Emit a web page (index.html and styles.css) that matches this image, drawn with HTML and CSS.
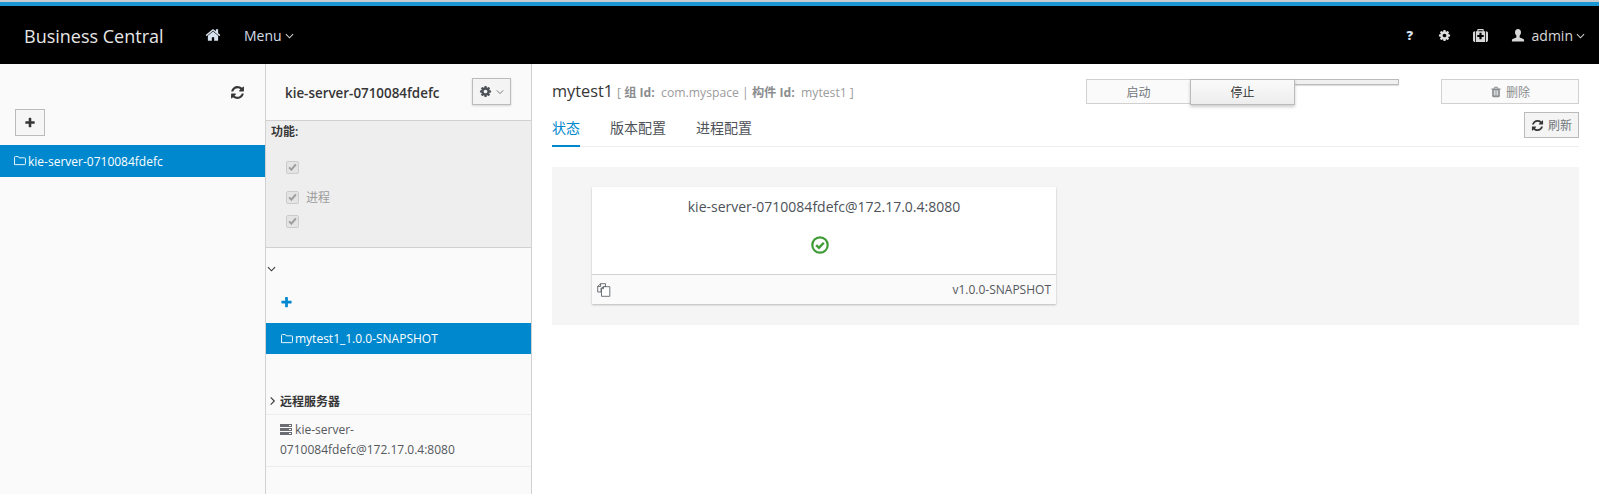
FILE: index.html
```html
<!DOCTYPE html>
<html lang="zh">
<head>
<meta charset="utf-8">
<title>Business Central</title>
<link rel="stylesheet" href="styles.css">
</head>
<body>
<svg class="defs" aria-hidden="true">
  <symbol id="i-refresh" viewBox="0 0 1792 1792"><path d="M1639 1056q0 5-1 7-64 268-268 434.5t-478 166.5q-146 0-282.5-55t-243.5-157l-129 129q-19 19-45 19t-45-19-19-45v-448q0-26 19-45t45-19h448q26 0 45 19t19 45-19 45l-137 137q71 66 161 102t187 36q134 0 250-65t186-179q11-17 53-117 8-23 30-23h192q13 0 22.5 9.5t9.5 22.5zm25-800v448q0 26-19 45t-45 19h-448q-26 0-45-19t-19-45 19-45l138-138q-148-137-349-137-134 0-250 65t-186 179q-11 17-53 117-8 23-30 23h-199q-13 0-22.5-9.5t-9.5-22.5v-7q65-268 270-434.5t480-166.5q146 0 284 55.5t245 156.5l130-129q19-19 45-19t45 19 19 45z"/></symbol>
  <symbol id="i-plus" viewBox="0 0 1792 1792"><path d="M1600 736v192q0 40-28 68t-68 28h-416v416q0 40-28 68t-68 28h-192q-40 0-68-28t-28-68v-416h-416q-40 0-68-28t-28-68v-192q0-40 28-68t68-28h416v-416q0-40 28-68t68-28h192q40 0 68 28t28 68v416h416q40 0 68 28t28 68z"/></symbol>
  <symbol id="i-cog" viewBox="0 0 1792 1792"><path d="M1152 896q0-106-75-181t-181-75-181 75-75 181 75 181 181 75 181-75 75-181zm512-109v222q0 12-8 23t-20 13l-185 28q-19 54-39 91 35 50 107 138 10 12 10 25t-9 23q-27 37-99 108t-94 71q-12 0-26-9l-138-108q-44 23-91 38-16 136-29 186-7 28-36 28h-222q-14 0-24.5-8.5t-11.5-21.5l-28-184q-49-16-90-37l-141 107q-10 9-25 9-14 0-25-11-126-114-165-168-7-10-7-23 0-12 8-23 15-21 51-66.5t54-70.5q-27-50-41-99l-183-27q-13-2-21-12.5t-8-23.5v-222q0-12 8-23t19-13l186-28q14-46 39-92-40-57-107-138-10-12-10-24 0-10 9-23 26-36 98.5-107.5t94.5-71.5q13 0 26 10l138 107q44-23 91-38 16-136 29-186 7-28 36-28h222q14 0 24.5 8.5t11.5 21.5l28 184q49 16 90 37l142-107q9-9 24-9 13 0 25 10 129 119 165 170 7 8 7 22 0 12-8 23-15 21-51 66.5t-54 70.5q26 50 41 98l183 28q13 2 21 12.5t8 23.5z"/></symbol>
  <symbol id="i-home" viewBox="0 0 1792 1792"><path d="M1472 992v480q0 26-19 45t-45 19h-384v-384h-256v384h-384q-26 0-45-19t-19-45v-480q0-1 .5-3t.5-3l575-474 575 474q1 2 1 6zm223-69l-62 74q-8 9-21 11h-3q-13 0-21-7l-692-577-692 577q-12 8-24 7-13-2-21-11l-62-74q-8-10-7-23.5t11-21.5l719-599q32-26 76-26t76 26l244 204v-195q0-14 9-23t23-9h192q14 0 23 9t9 23v408l219 182q10 8 11 21.5t-7 23.5z"/></symbol>
  <symbol id="i-user" viewBox="0 0 16 16"><path d="M8 1c2 0 3.200 1.500 3.200 3.500 0 1.500-.7 3-1.500 3.700v1.300c0 .6 1 1 2.300 1.500 1.400.6 2.500 1 2.500 2.200v1.300H1.500v-1.300c0-1.200 1.100-1.600 2.500-2.200 1.300-.5 2.300-.9 2.300-1.500V8.200C5.500 7.500 4.800 6 4.800 4.500 4.800 2.500 6 1 8 1z"/></symbol>
  <symbol id="i-medkit" viewBox="0 0 1792 1792"><path d="M1280 1056v-192q0-14-9-23t-23-9h-224v-224q0-14-9-23t-23-9h-192q-14 0-23 9t-9 23v224h-224q-14 0-23 9t-9 23v192q0 14 9 23t23 9h224v224q0 14 9 23t23 9h192q14 0 23-9t9-23v-224h224q14 0 23-9t9-23zm-640-672h512v-128h-512v128zm-384 0v1280h-32q-92 0-158-66t-66-158v-832q0-92 66-158t158-66h32zm1184 0v1280h-1088v-1280h160v-160q0-40 28-68t68-28h576q40 0 68 28t28 68v160h160zm352 224v832q0 92-66 158t-158 66h-32v-1280h32q92 0 158 66t66 158z"/></symbol>
  <symbol id="i-trash" viewBox="0 0 1792 1792"><path d="M704 1376v-704q0-14-9-23t-23-9h-64q-14 0-23 9t-9 23v704q0 14 9 23t23 9h64q14 0 23-9t9-23zm256 0v-704q0-14-9-23t-23-9h-64q-14 0-23 9t-9 23v704q0 14 9 23t23 9h64q14 0 23-9t9-23zm256 0v-704q0-14-9-23t-23-9h-64q-14 0-23 9t-9 23v704q0 14 9 23t23 9h64q14 0 23-9t9-23zm-544-992h448l-48-117q-7-9-17-11h-317q-10 2-17 11zm928 32v64q0 14-9 23t-23 9h-96v948q0 83-47 143.5t-113 60.5h-832q-66 0-113-58.5t-47-141.5v-952h-96q-14 0-23-9t-9-23v-64q0-14 9-23t23-9h309l70-167q15-37 54-63t79-26h320q40 0 79 26t54 63l70 167h309q14 0 23 9t9 23z"/></symbol>
  <symbol id="i-folder" viewBox="0 0 13 11"><path d="M.5 9.500V1.500q0-1 1-1h3l1 1.500h6q1 0 1 1v5.500q0 1-1 1h-10q-1 0-1-1z" fill="none" stroke="currentColor"/></symbol>
  <symbol id="i-down" viewBox="0 0 10 6"><path d="M1 1l4 4 4-4" fill="none" stroke="currentColor" stroke-width="1.200"/></symbol>
  <symbol id="i-check" viewBox="0 0 12 10"><path d="M1.500 5.500l3 3 6-7" fill="none" stroke="currentColor" stroke-width="2.600"/></symbol>
</svg>

<div class="topline"></div>
<header class="navbar">
  <span class="brand">Business Central</span>
  <svg class="ico nav-home"><use href="#i-home"/></svg>
  <span class="nav-menu">Menu</span>
  <svg class="chev"><use href="#i-down"/></svg>
  <nav class="nav-right">
    <span class="nav-q">?</span>
    <svg class="ico nav-cog"><use href="#i-cog"/></svg>
    <svg class="ico nav-kit"><use href="#i-medkit"/></svg>
    <svg class="ico nav-user"><use href="#i-user"/></svg>
    <span class="nav-admin">admin</span>
    <svg class="chev"><use href="#i-down"/></svg>
  </nav>
</header>

<main class="layout">
  <aside class="col-left">
    <div class="left-refresh"><svg class="ico ico-refresh"><use href="#i-refresh"/></svg></div>
    <button class="btn-add"><svg class="ico ico-plus"><use href="#i-plus"/></svg></button>
    <div class="row-selected left-row"><svg class="ico-folder"><use href="#i-folder"/></svg><span>kie-server-0710084fdefc</span></div>
  </aside>

  <section class="col-mid">
    <div class="mid-head">
      <strong class="mid-title">kie-server-0710084fdefc</strong>
      <button class="btn-gear"><svg class="ico ico-gear"><use href="#i-cog"/></svg><svg class="chev chev-gear"><use href="#i-down"/></svg></button>
    </div>
    <div class="caps">
      <div class="caps-title">功能:</div>
      <div class="cap cap-first"><span class="checkbox"><svg class="check-mark"><use href="#i-check"/></svg></span></div>
      <div class="cap cap-second"><span class="checkbox"><svg class="check-mark"><use href="#i-check"/></svg></span><span class="cap-label">进程</span></div>
      <div class="cap cap-third"><span class="checkbox"><svg class="check-mark"><use href="#i-check"/></svg></span></div>
    </div>
    <div class="mid-toggle"><svg class="chev chev-dark"><use href="#i-down"/></svg></div>
    <div class="mid-add"><svg class="ico ico-plus-blue"><use href="#i-plus"/></svg></div>
    <div class="row-selected mid-row"><svg class="ico-folder"><use href="#i-folder"/></svg><span>mytest1_1.0.0-SNAPSHOT</span></div>
    <div class="remote-head"><svg class="chev chev-right"><use href="#i-down"/></svg><strong>远程服务器</strong></div>
    <div class="remote-item">
      <svg class="ico-server" viewBox="0 0 12 11"><path d="M0 0h12v3H0zM0 4h12v3H0zM0 8h12v3H0z"/><path class="server-led" d="M9 1h2v1H9zM9 5h2v1H9zM9 9h2v1H9z"/></svg>
      kie-server-<br>0710084fdefc@172.17.0.4:8080
    </div>
  </section>

  <section class="col-main">
    <div class="main-head">
      <div class="main-title"><span class="title-name">mytest1</span><span class="title-meta">[ <b>组 Id:</b>&nbsp; com.myspace | <b>构件 Id:</b>&nbsp; mytest1 ]</span></div>
      <div class="btn-group">
        <button class="btn btn-start">启动</button>
        <button class="btn btn-stop">停止</button>
        <span class="btn-rest"></span>
      </div>
      <button class="btn btn-delete"><svg class="ico ico-trash"><use href="#i-trash"/></svg>删除</button>
    </div>
    <div class="tabs-row">
      <div class="tabs">
        <a class="tab tab-active">状态</a>
        <a class="tab">版本配置</a>
        <a class="tab">进程配置</a>
      </div>
      <button class="btn btn-refresh"><svg class="ico ico-refresh-sm"><use href="#i-refresh"/></svg>刷新</button>
    </div>
    <div class="status-panel">
      <article class="card">
        <div class="card-title">kie-server-0710084fdefc@172.17.0.4:8080</div>
        <div class="card-status">
          <svg class="ok" viewBox="0 0 18 18"><circle cx="9" cy="9" r="7.700" fill="none" stroke="#3f9c35" stroke-width="2.200"/><path d="M5.200 9.200l2.800 2.700 4.800-5.200" fill="none" stroke="#3f9c35" stroke-width="2.400"/></svg>
        </div>
        <div class="card-foot">
          <svg class="ico-copy" viewBox="0 0 14 14"><path d="M3.500 .7H8.500V4H5.500L4 5.500V9H.7V3.500zM3.500 .7V3.500H.7" fill="none" stroke="#4d5258" stroke-width=".8"/><path d="M6.500 3.700H12.800V13.300H4.500V5.700zM6.500 3.700V5.700H4.500" fill="#fff" stroke="#4d5258" stroke-width=".8"/></svg>
          <span class="card-version">v1.0.0-SNAPSHOT</span>
        </div>
      </article>
    </div>
  </section>
</main>
</body>
</html>
```
FILE: styles.css
```css
* { box-sizing: border-box; }
html, body { margin: 0; height: 494px; overflow: hidden; }
body { font-family: "Open Sans", "Noto Sans CJK SC", sans-serif; font-size: 12px; color: #363636; background: #fff; }
.defs { display: none; }
button { font-family: inherit; padding: 0; cursor: default; }
.ico { fill: currentColor; display: block; flex: none; }

.topline { height: 6px; border-top: 2px solid #c9ccce; background: #1b98d4; }
.navbar { height: 58px; background: #000; color: #d1d1d1; display: flex; align-items: center; padding: 0 14px 0 24px; }
.brand { font-size: 18px; color: #e6e6e6; width: 181px; flex: none; position: relative; top: 1px; }
.nav-home { width: 16px; height: 16px; color: #d8e3ef; }
.nav-menu { font-size: 14px; margin-left: 23px; color: #d1dbe6; }
.chev { width: 9px; height: 6px; color: #d1d1d1; margin-left: 3px; margin-top: 2px; flex: none; display: block; }
.nav-right { margin-left: auto; display: flex; align-items: center; }
.nav-q { font-weight: 800; font-size: 13px; color: #d8e3ef; width: 8px; }
.nav-cog { width: 13px; height: 13px; margin-left: 23px; color: #e0e0e0; }
.nav-kit { width: 15px; height: 15px; margin-left: 22px; color: #d8d8d8; }
.nav-user { width: 16px; height: 15px; margin-left: 22px; color: #d8d8d8; }
.nav-admin { font-size: 14px; margin-left: 6px; color: #d8d8d8; }

.layout { display: flex; height: 430px; }
.col-left { width: 266px; flex: none; background: #fafafa; border-right: 1px solid #d1d1d1; display: flex; flex-direction: column; }
.col-mid { width: 266px; flex: none; background: #fafafa; border-right: 1px solid #d1d1d1; display: flex; flex-direction: column; }
.col-main { flex: 1; padding: 15px 20px 0 20px; min-width: 0; }

.left-refresh { height: 45px; padding: 21px 20px 0 0; display: flex; justify-content: flex-end; }
.ico-refresh { width: 15px; height: 15px; color: #363636; }
.btn-add { width: 30px; height: 27px; margin-left: 15px; background: #f6f6f6; border: 1px solid #bbb; display: flex; align-items: center; justify-content: center; }
.ico-plus { width: 12px; height: 12px; color: #363636; }
.row-selected { background: #0088ce; color: #fff; display: flex; align-items: center; font-size: 12px; }
.left-row { height: 32px; margin-top: 9px; padding-left: 14px; }
.ico-folder { width: 12px; height: 10px; margin-right: 2px; flex: none; color: #fff; }

.mid-head { height: 56px; display: flex; align-items: center; padding: 0 20px 0 19px; justify-content: space-between; }
.mid-title { font-size: 13.4px; font-weight: 600; color: #363636; margin-top: 2px; }
.btn-gear { width: 39px; height: 27px; margin-top: -1px; background: #f4f4f4; border: 1px solid #bbb; box-shadow: 0 1px 2px rgba(0,0,0,.15); display: flex; align-items: center; justify-content: center; }
.ico-gear { width: 13px; height: 13px; color: #4d5258; }
.chev-gear { color: #72767b; margin-left: 4px; width: 8px; margin-top: 0; }
.caps { height: 128px; background: #eee; border-top: 1px solid #d1d1d1; border-bottom: 1px solid #d1d1d1; padding: 1px 0 0 5px; }
.caps-title { font-weight: 600; font-size: 12px; height: 20px; line-height: 20px; }
.cap { display: flex; align-items: center; height: 20px; padding-left: 15px; }
.cap-first { margin-top: 15px; }
.cap-second { margin-top: 10px; }
.cap-third { margin-top: 4px; }
.checkbox { width: 13px; height: 13px; border: 1px solid #ccc; border-radius: 2px; background: #e4e4e4; display: flex; align-items: center; justify-content: center; flex: none; }
.check-mark { width: 9px; height: 8px; color: #9c9c9c; display: block; }
.cap-label { margin-left: 7px; color: #9c9c9c; font-size: 12px; }
.mid-toggle { height: 40px; padding: 18px 0 0 1px; }
.chev-dark { color: #363636; margin-left: 0; margin-top: 0; width: 9px; }
.chev-right { transform: rotate(-90deg); color: #363636; margin: 0 0 0 1px; width: 9px; }
.mid-add { height: 35px; padding: 8px 0 0 14px; }
.ico-plus-blue { width: 13px; height: 13px; color: #0088ce; }
.mid-row { height: 31px; padding-left: 15px; }
.remote-head { margin-top: 36px; height: 25px; display: flex; align-items: center; padding-left: 1px; border-bottom: 1px solid #ededed; font-size: 12px; color: #363636; padding-bottom: 3px; }
.remote-head strong { font-weight: 600; margin-left: 3px; }
.remote-item { border-bottom: 1px solid #ededed; padding: 5px 10px 6px 14px; line-height: 20px; font-size: 12px; color: #55585c; }
.ico-server { width: 12px; height: 11px; fill: #6a6d71; vertical-align: -1px; }
.server-led { fill: #fff; }

.main-head { display: flex; align-items: flex-start; height: 24px; }
.main-title { flex: none; width: 534px; display: flex; align-items: baseline; white-space: nowrap; padding-top: 1px; }
.title-name { font-size: 16.3px; color: #363636; }
.title-meta { font-size: 12.2px; color: #9c9c9c; margin-left: 4px; }
.title-meta b { font-weight: 700; color: #8b8d8f; }
.btn-group { display: flex; align-items: flex-start; flex: none; }
.btn { font-size: 12px; color: #4d5258; background: #fafafa; border: 1px solid #d1d1d1; height: 25px; display: flex; align-items: center; justify-content: center; }
.btn-start { width: 105px; color: #72767b; }
.btn-stop { width: 105px; margin-left: -1px; background: linear-gradient(#fafafa, #ededed); border-color: #bbb; box-shadow: 0 2px 3px rgba(0,0,0,.2); height: 26px; position: relative; color: #363636; }
.btn-rest { width: 104px; height: 6px; background: #f0f0f0; border: 1px solid #bbb; border-left: 0; border-radius: 0 0 1px 1px; box-shadow: 0 1px 1px rgba(0,0,0,.15); }
.btn-delete { width: 138px; margin-left: auto; color: #8b8d8f; }
.ico-trash { width: 12px; height: 12px; margin-right: 4px; color: #8b8d8f; }

.tabs-row { display: flex; justify-content: space-between; align-items: flex-start; height: 44px; border-bottom: 1px solid #ededed; }
.tabs { display: flex; height: 44px; align-items: flex-end; }
.tab { font-size: 14px; color: #4d5258; line-height: 20px; height: 32px; padding-top: 3px; margin-right: 30px; }
.tab-active { color: #0088ce; border-bottom: 2px solid #0088ce; }
.btn-refresh { width: 55px; height: 26px; margin-top: 9px; border-color: #bbb; background: #f4f4f4; color: #72767b; }
.ico-refresh-sm { width: 13px; height: 13px; margin-right: 4px; color: #363636; }

.status-panel { background: #f5f5f5; margin-top: 20px; height: 158px; padding: 20px 0 0 40px; }
.card { width: 464px; height: 117px; background: #fff; box-shadow: 0 1px 2px rgba(0,0,0,.25); display: flex; flex-direction: column; }
.card-title { text-align: center; font-size: 14px; line-height: 20px; padding-top: 10px; color: #4d5258; }
.card-status { flex: 1; display: flex; justify-content: center; padding: 19px 8px 0 0; }
.ok { width: 18px; height: 18px; display: block; }
.card-foot { height: 30px; flex: none; background: #fafafa; border-top: 1px solid #d1d1d1; display: flex; align-items: center; justify-content: space-between; padding: 0 5px; }
.ico-copy { width: 14px; height: 14px; display: block; }
.card-version { font-size: 12px; color: #55585c; }
```
